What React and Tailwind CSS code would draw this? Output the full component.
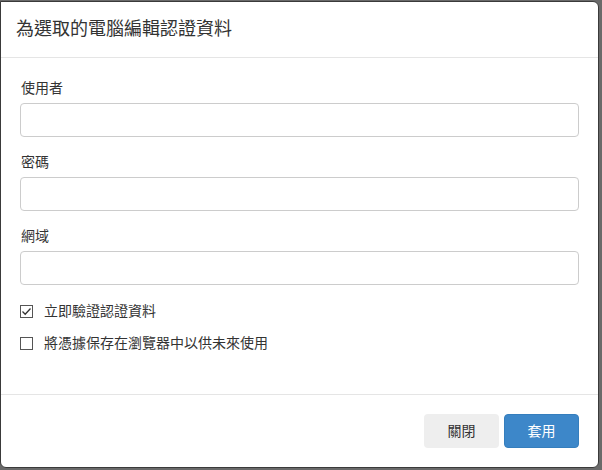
import React from "react";

const font = { fontFamily: '"Liberation Sans", "Noto Sans CJK TC", sans-serif' };

const Field = ({ label, type = "text" }) => (
  <div className="mb-[15px]">
    <label className="block text-[14px] leading-[20px] text-[#333] mb-[5px] pl-[1px]">
      {label}
    </label>
    <input
      type={type}
      className="block w-full h-[34px] rounded-[4px] border border-[#ccc] bg-white px-3 text-[14px] outline-none"
    />
  </div>
);

const Check = ({ label, checked }) => (
  <label className="flex items-center h-[20px] text-[14px] text-[#333]">
    <span className="w-[13px] h-[13px] border border-[#555] bg-white flex items-center justify-center mr-[11px]">
      {checked && (
        <svg width="11" height="11" viewBox="0 0 11 11">
          <path d="M1.5 5.5 L4.2 8.2 L9.5 2.5" fill="none" stroke="#333" strokeWidth="1.3" />
        </svg>
      )}
    </span>
    {label}
  </label>
);

export default function App() {
  return (
    <div className="w-[602px] h-[470px] bg-[#6a6a6a] pt-[1px] overflow-hidden" style={font}>
      <div className="w-[599px] h-[467px] bg-white border border-[#3a3a3a] rounded-r-[6px] rounded-bl-[6px] flex flex-col">
        <div className="h-[56px] flex items-center px-[15px] border-b border-[#e5e5e5]">
          <h4 className="text-[18px] text-[#333]">為選取的電腦編輯認證資料</h4>
        </div>
        <div className="px-[19px] pt-[20px] flex-1">
          <Field label="使用者" />
          <Field label="密碼" type="password" />
          <Field label="網域" />
          <div className="mt-[16px] flex flex-col gap-[12px]">
            <Check label="立即驗證認證資料" checked />
            <Check label="將憑據保存在瀏覽器中以供未來使用" />
          </div>
        </div>
        <div className="border-t border-[#e5e5e5] h-[73px] flex items-start justify-end gap-[5px] pt-[19px] px-[19px]">
          <button className="w-[75px] h-[34px] rounded-[4px] bg-[#eee] text-[14px] text-[#333]">
            關閉
          </button>
          <button className="w-[75px] h-[34px] rounded-[4px] bg-[#3d87c9] border border-[#357ebd] text-[14px] text-white">
            套用
          </button>
        </div>
      </div>
    </div>
  );
}
